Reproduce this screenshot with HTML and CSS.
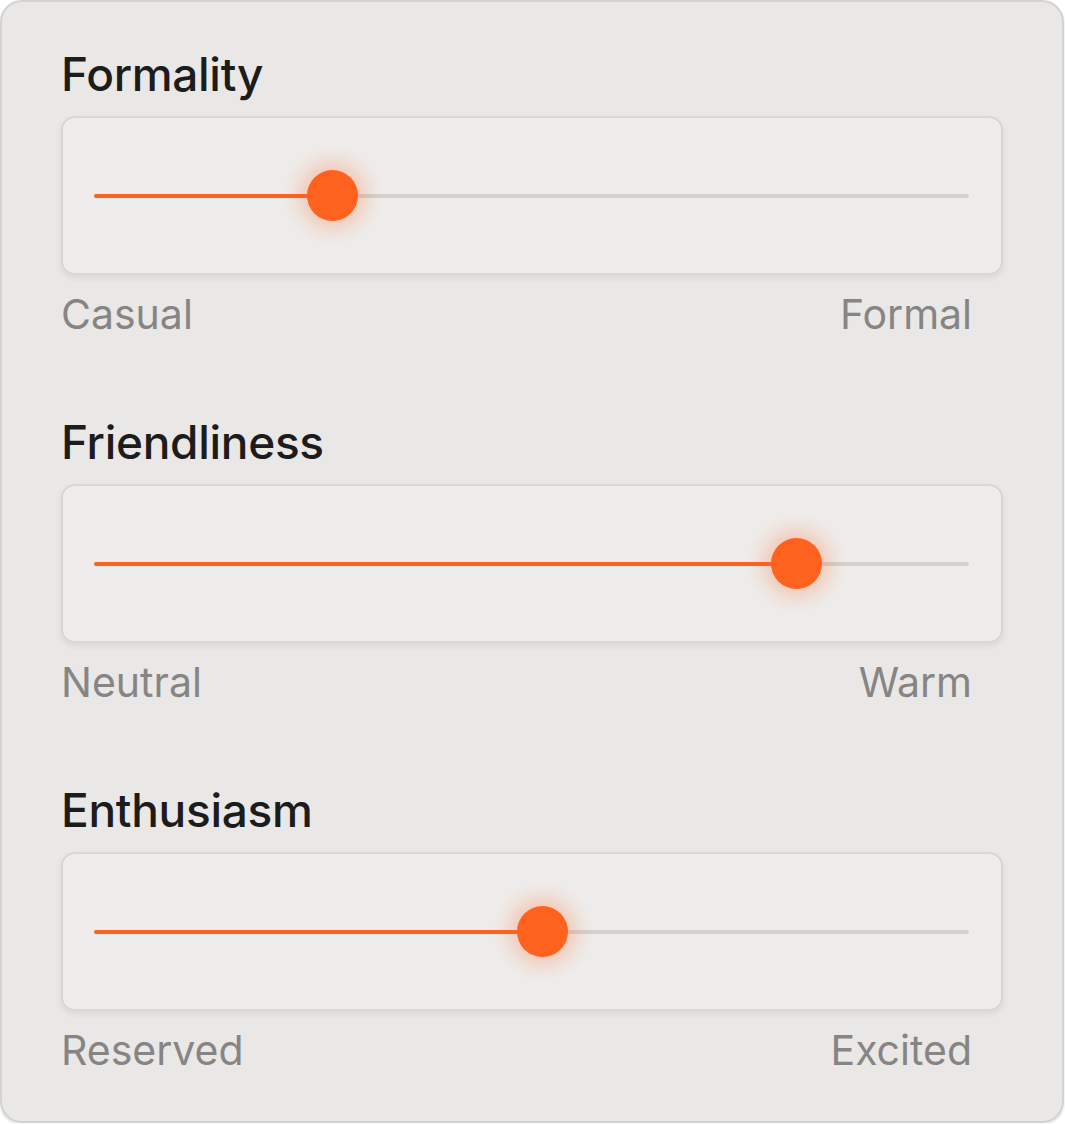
FILE: index.html
```html
<!DOCTYPE html>
<html>
<head>
<meta charset="utf-8">
<link rel="stylesheet" href="styles.css">
</head>
<body>
<div class="card">
  <section class="setting">
    <h2 class="title">Formality</h2>
    <div class="box">
      <div class="track">
        <div class="fill" style="width:27.3%"></div>
        <div class="thumb" style="left:27.3%"></div>
      </div>
    </div>
    <div class="labels"><span>Casual</span><span>Formal</span></div>
  </section>
  <section class="setting">
    <h2 class="title">Friendliness</h2>
    <div class="box">
      <div class="track">
        <div class="fill" style="width:80.3%"></div>
        <div class="thumb" style="left:80.3%"></div>
      </div>
    </div>
    <div class="labels"><span>Neutral</span><span>Warm</span></div>
  </section>
  <section class="setting">
    <h2 class="title">Enthusiasm</h2>
    <div class="box">
      <div class="track">
        <div class="fill" style="width:51.3%"></div>
        <div class="thumb" style="left:51.3%"></div>
      </div>
    </div>
    <div class="labels"><span>Reserved</span><span>Excited</span></div>
  </section>
</div>
</body>
</html>
```

FILE: styles.css
```css
* { box-sizing: border-box; }
html, body { margin: 0; padding: 0; background: #ffffff; }
body { font-family: Inter, "Noto Sans", sans-serif; }

.card {
  width: 1064px;
  height: 1123px;
  background: #e9e8e6;
  border: 2px solid #d3d2d0;
  border-radius: 22px;
  box-shadow: 0 2px 3px rgba(0,0,0,0.12);
  padding: 44px 59px 0 59px;
  display: flex;
  flex-direction: column;
  gap: 75px;
}

.setting { display: flex; flex-direction: column; }

.title {
  margin: 0 0 14px 0;
  font-size: 46px;
  line-height: 56px;
  font-weight: 550;
  color: #1c1c1c;
  letter-spacing: -0.3px;
}

.box {
  height: 159px;
  background: #eeedeb;
  border: 2px solid #d8d7d5;
  border-radius: 14px;
  box-shadow: 0 3px 6px rgba(0,0,0,0.07);
  padding: 0 32px 0 31px;
  display: flex;
  align-items: center;
}

.track {
  position: relative;
  flex: 1;
  height: 4px;
  border-radius: 2px;
  background: #d2d1cf;
}

.fill {
  position: absolute;
  left: 0; top: 0; bottom: 0;
  background: #ff611f;
  border-radius: 2px;
}

.thumb {
  position: absolute;
  top: 50%;
  width: 51px;
  height: 51px;
  margin: -25.5px 0 0 -25.5px;
  border-radius: 50%;
  background: #ff611f;
  box-shadow: 0 0 22px 7px rgba(255, 97, 31, 0.32);
}

.labels {
  display: flex;
  justify-content: space-between;
  padding: 14px 31px 0 0;
  font-size: 41px;
  line-height: 50px;
  color: #868584;
}
```
